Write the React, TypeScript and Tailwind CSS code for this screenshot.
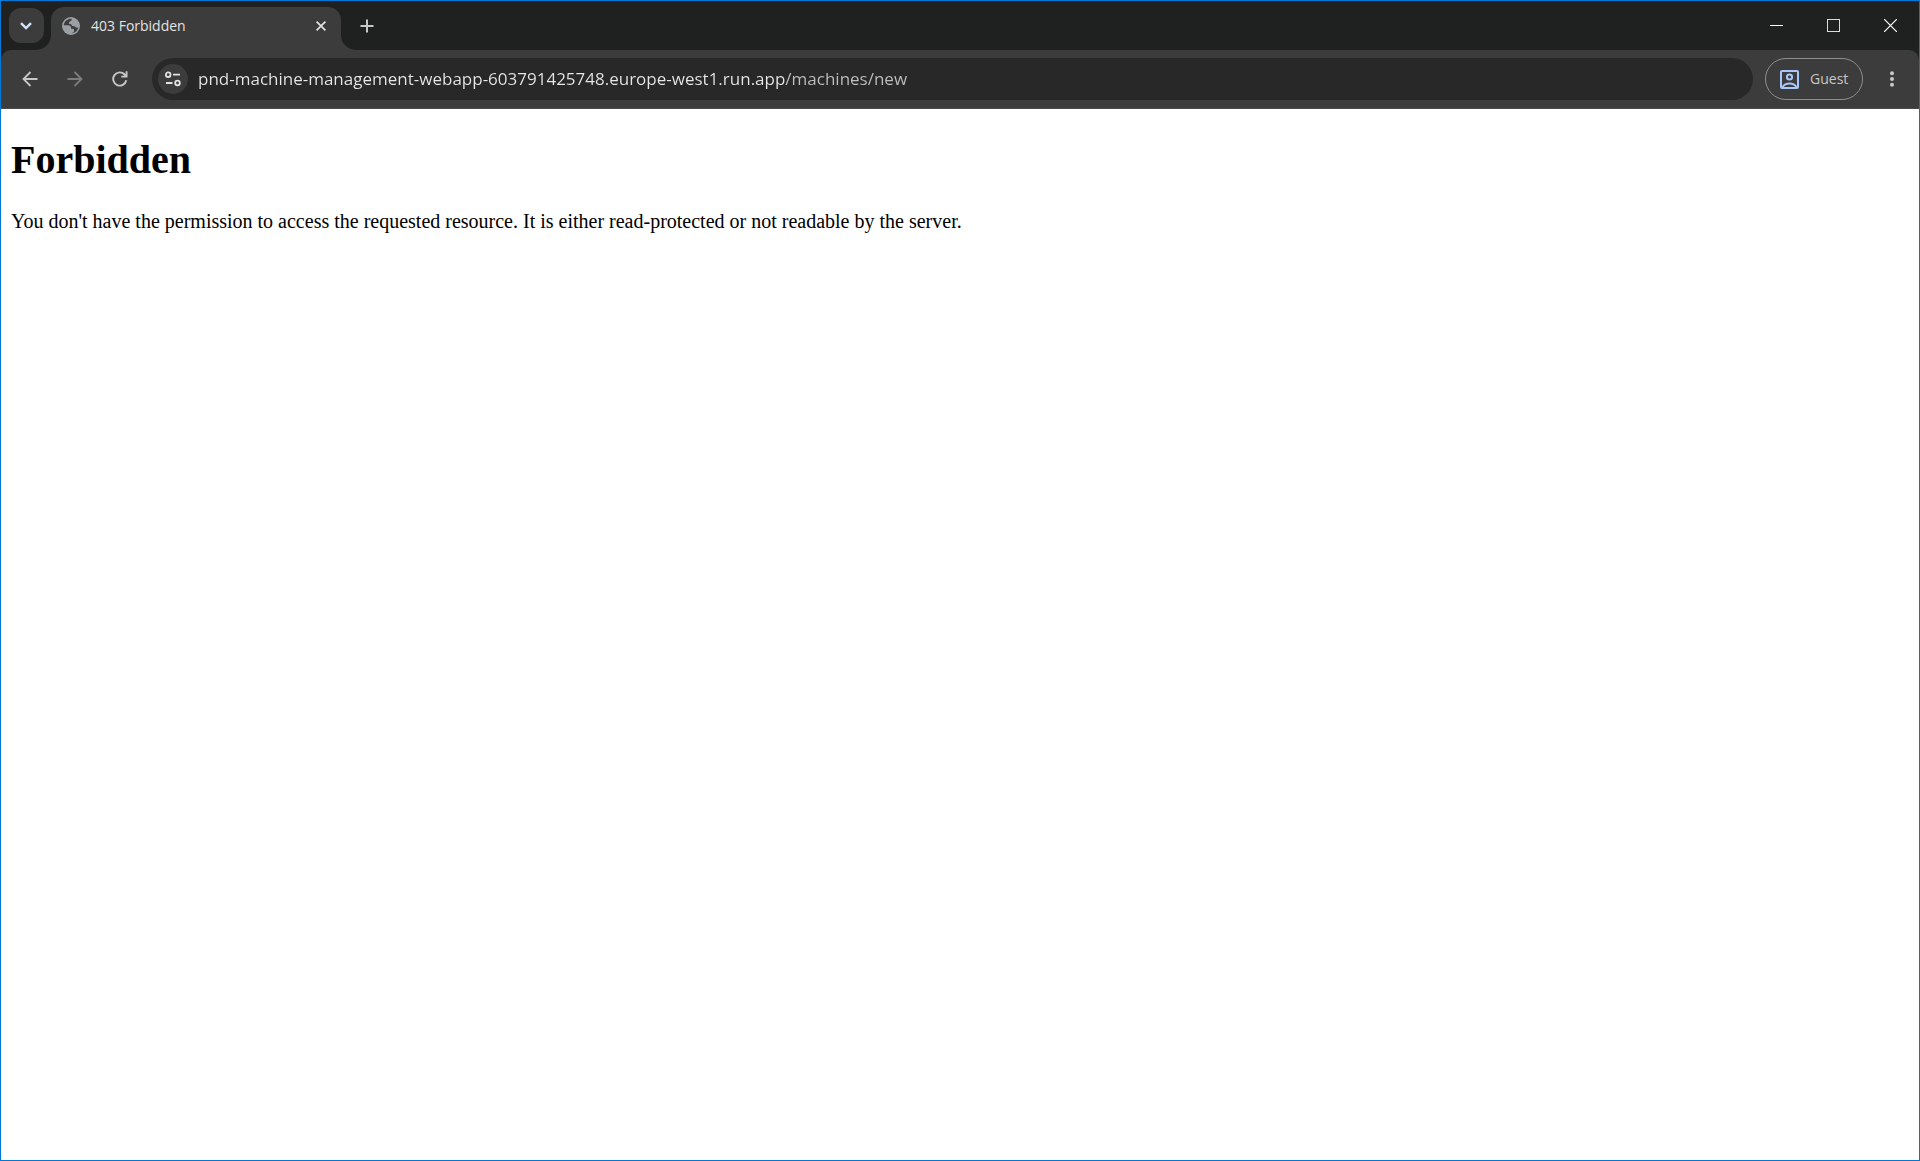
import { FC, ReactNode } from "react";

const HOST = "pnd-machine-management-webapp-603791425748.europe-west1.run.app";
const PATH = "/machines/new";

interface IconButtonProps {
	label: string;
	className: string;
	disabled?: boolean;
	children: ReactNode;
}

const IconButton: FC<IconButtonProps> = ({
	label,
	className,
	disabled,
	children,
}) => {
	return (
		<button
			type="button"
			aria-label={label}
			disabled={disabled}
			className={`flex shrink-0 items-center justify-center ${className}`}>
			{children}
		</button>
	);
};

const Tab: FC = () => {
	return (
		<div className="relative ml-[7px] flex w-[290px] items-center self-end h-[43px] rounded-t-[13px] bg-[#3c3c3c] pl-[11px] pr-[8px] pb-[6px]">
			<svg
				className="absolute bottom-0 -left-[15px]"
				width="15"
				height="15"
				viewBox="0 0 15 15">
				<path d="M15 0v15H0A15 15 0 0 0 15 0z" fill="#3c3c3c" />
			</svg>
			<svg
				className="absolute bottom-0 -right-[15px]"
				width="15"
				height="15"
				viewBox="0 0 15 15">
				<path d="M0 0v15h15A15 15 0 0 1 0 0z" fill="#3c3c3c" />
			</svg>
			<svg width="18" height="18" viewBox="0 0 18 18" className="shrink-0">
				<circle cx="9" cy="9" r="9" fill="#9aa0a6" />
				<path
					d="M9.9 1.7C8 1.500 6 2.100 4.500 3.300 3 4.500 2 6.200 1.700 8.200h4.500c1.600 0 2.900 1 2.900 2.500v1.100h1.800c.9 0 1.200.8 1.200 1.500v1c0 .6-.5.9-1 1.100L9.500 16.300A7.300 7.300 0 0 0 16.200 10.200c-.6.500-1.300.6-2 .3-.9-.4-1-1.200-1.900-1.300-1.300-.1-2.400-.3-2.800-1.300-.3-.8-1-.8-1.700-.9-1-.2-1.200-1.400-.6-2.100.5-.6 1.300-.7 1.900-1.100.6-.5.1-1.400.8-2.100z"
					fill="#3c3c3c"
				/>
			</svg>
			<h2 className="ml-[11px] flex-1 truncate text-[14px] leading-5 text-[#e3e3e3]">
				403 Forbidden
			</h2>
			<IconButton label="Close tab" className="h-5 w-5 mr-[2px]">
				<svg width="10" height="10" viewBox="0 0 10 10">
					<path
						d="M.6.6l8.800 8.800M9.400.6L.6 9.400"
						stroke="#e3e3e3"
						strokeWidth="1.700"
					/>
				</svg>
			</IconButton>
		</div>
	);
};

const TabStrip: FC = () => {
	return (
		<header className="flex h-[49px] items-start bg-[#1f2020] pl-2">
			<IconButton
				label="Search tabs"
				className="mt-[7px] h-[35px] w-[35px] rounded-[12px] bg-[#3c3c3c]">
				<svg width="13" height="8" viewBox="0 0 13 8">
					<path
						d="M1 1.200l5 4.800 5-4.800"
						fill="none"
						stroke="#d3e3fd"
						strokeWidth="2.400"
					/>
				</svg>
			</IconButton>
			<Tab />
			<IconButton label="New tab" className="ml-[8px] mt-[7px] h-[35px] w-[36px]">
				<svg width="14" height="14" viewBox="0 0 14 14">
					<path d="M7 .5v13M.5 7h13" stroke="#c7c7c7" strokeWidth="2" />
				</svg>
			</IconButton>
			<div className="ml-auto flex">
				<IconButton label="Minimize" className="h-[49px] w-[57px]">
					<svg width="13" height="13" viewBox="0 0 13 13">
						<path d="M0 6.500h13" stroke="#fff" />
					</svg>
				</IconButton>
				<IconButton label="Maximize" className="h-[49px] w-[57px]">
					<svg width="13" height="13" viewBox="0 0 13 13">
						<rect
							x=".5"
							y=".5"
							width="12"
							height="12"
							fill="none"
							stroke="#dcdcdc"
						/>
					</svg>
				</IconButton>
				<IconButton label="Close" className="h-[49px] w-[57px]">
					<svg width="13" height="13" viewBox="0 0 13 13">
						<path d="M0 0l13 13M13 0L0 13" stroke="#fff" strokeWidth="1.200" />
					</svg>
				</IconButton>
			</div>
		</header>
	);
};

const Toolbar: FC = () => {
	return (
		<div className="bg-[#1f2020]">
			<nav className="flex h-[59px] items-center rounded-t-[10px] border-b border-[#4a4848] bg-[#3c3c3c] pl-[6px] pr-[5px]">
				<IconButton label="Back" className="h-[42px] w-[45px]">
					<svg width="16" height="16" viewBox="0 0 16 16">
						<path
							d="M15.500 8H1.500M8.500 1L1.500 8l7 7"
							fill="none"
							stroke="#c7c7c7"
							strokeWidth="1.800"
						/>
					</svg>
				</IconButton>
				<IconButton label="Forward" disabled className="h-[42px] w-[45px]">
					<svg width="16" height="16" viewBox="0 0 16 16">
						<path
							d="M.5 8h14M7.500 1l7 7-7 7"
							fill="none"
							stroke="#7c7c7c"
							strokeWidth="1.800"
						/>
					</svg>
				</IconButton>
				<IconButton label="Reload" className="h-[42px] w-[45px]">
					<svg width="16" height="16" viewBox="0 0 16 16">
						<path
							d="M14.300 9.300A6.600 6.600 0 1 1 12.700 3.500"
							fill="none"
							stroke="#c7c7c7"
							strokeWidth="1.900"
						/>
						<path
							d="M13.600.3h1.900v6.300H9.300V4.700h3l-1-1 1.200-1.400 1.100 1z"
							fill="#c7c7c7"
						/>
					</svg>
				</IconButton>
				<form className="ml-[10px] flex h-[42px] min-w-0 flex-1 items-center rounded-full bg-[#282828] pl-[6px] pr-5">
					<IconButton
						label="View site information"
						className="h-[30px] w-[30px] rounded-full bg-[#3c3c3c]">
						<svg width="16" height="16" viewBox="0 0 16 16">
							<g fill="none" stroke="#e3e3e3" strokeWidth="1.800">
								<circle cx="3.200" cy="3.700" r="2.300" />
								<path d="M8 3.700h7M1 12h6.500" />
								<circle cx="12.500" cy="12" r="2.300" />
							</g>
						</svg>
					</IconButton>
					{/* host is brighter than the path that follows it */}
					<input
						type="text"
						aria-label="Address"
						defaultValue={HOST + PATH}
						spellCheck={false}
						className="ml-[10px] min-w-0 flex-1 bg-[linear-gradient(to_right,#e8e8e8_587px,#c0c0c0_587px)] bg-clip-text text-[17px] leading-6 text-[#e8e8e8] outline-none [-webkit-text-fill-color:transparent]"
					/>
				</form>
				<button
					type="button"
					className="ml-3 flex h-[42px] w-[98px] shrink-0 items-center rounded-full border border-[#8e8e8e] pl-[14px] text-[14px] leading-5 text-[#c7c7c7]">
					<svg width="19" height="19" viewBox="0 0 19 19" className="mr-[11px]">
						<g fill="none" stroke="#a8c7fa" strokeWidth="2">
							<rect x="1" y="1" width="17" height="17" rx="1" />
							<circle cx="9.500" cy="7" r="2.600" />
							<path d="M2.500 17c1.500-2.200 4-3.400 7-3.400s5.500 1.200 7 3.400" />
						</g>
					</svg>
					Guest
				</button>
				<IconButton label="Menu" className="ml-[6px] h-[42px] w-[45px]">
					<svg width="4" height="16" viewBox="0 0 4 16" fill="#c7c7c7">
						<circle cx="2" cy="2.300" r="2" />
						<circle cx="2" cy="8" r="2" />
						<circle cx="2" cy="13.700" r="2" />
					</svg>
				</IconButton>
			</nav>
		</div>
	);
};

const App: FC = () => {
	return (
		<div className="flex min-h-screen flex-col border border-[#0078d7] bg-white font-['Open_Sans',sans-serif]">
			<TabStrip />
			<Toolbar />
			<main className="flex-1 px-[10px] pt-7 font-['Liberation_Serif',serif] text-black">
				<h1 className="text-[40px] font-bold leading-[46px]">Forbidden</h1>
				<p className="mt-[27px] text-[20px] leading-[23px]">
					You don&apos;t have the permission to access the requested resource.
					It is either read-protected or not readable by the server.
				</p>
			</main>
		</div>
	);
};

export default App;
